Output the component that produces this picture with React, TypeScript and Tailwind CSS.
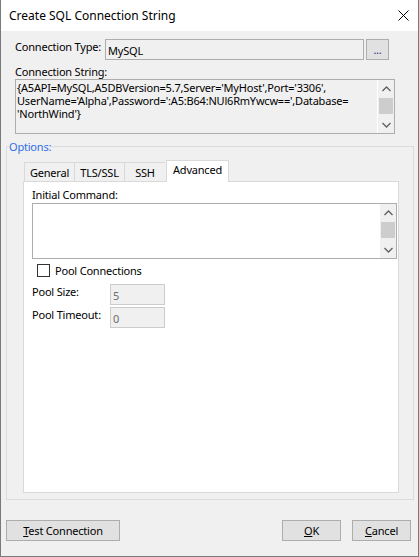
import React from "react";

const font = "font-['Noto_Sans',sans-serif]";

function Chevron({ up }: { up?: boolean }) {
  return (
    <svg width="9" height="6" viewBox="0 0 9 6" className="block">
      <path
        d={up ? "M0.5 5 L4.5 1 L8.5 5" : "M0.5 1 L4.5 5 L8.5 1"}
        fill="none"
        stroke="#606060"
        strokeWidth="1.3"
      />
    </svg>
  );
}

function VScroll({ thumbTop, thumbH }: { thumbTop: number; thumbH: number }) {
  return (
    <div className="w-[17px] h-full flex flex-col items-center bg-[#f0f0f0] border-l border-white">
      <div className="h-[17px] flex items-center justify-center">
        <Chevron up />
      </div>
      <div className="flex-1 w-full px-[1px]">
        <div className="w-full bg-[#cdcdcd]" style={{ marginTop: thumbTop, height: thumbH }} />
      </div>
      <div className="h-[17px] flex items-center justify-center">
        <Chevron />
      </div>
    </div>
  );
}

function Tab({ label, w, active }: { label: string; w: number; active?: boolean }) {
  return active ? (
    <div
      className="h-[22px] -mb-[1px] ml-[1px] flex items-start justify-center pt-[1px] bg-white border border-b-0 border-[#d9d9d9] relative z-10"
      style={{ width: w }}
    >
      {label}
    </div>
  ) : (
    <div
      className="h-[19px] flex items-center justify-center bg-[#f0f0f0] border border-b-0 border-r-0 border-[#d9d9d9] last:border-r"
      style={{ width: w }}
    >
      {label}
    </div>
  );
}

function Button({ children, w }: { children: React.ReactNode; w: number }) {
  return (
    <div
      className="h-[21px] flex items-center justify-center bg-[#e1e1e1] border border-[#adadad]"
      style={{ width: w }}
    >
      {children}
    </div>
  );
}

export default function App() {
  return (
    <div
      className={`${font} w-[419px] h-[557px] flex flex-col border border-t-0 border-[#7a7a7a] bg-[#f0f0f0] text-[11px] leading-[15px] tracking-[-0.2px] text-black`}
    >
      {/* title bar */}
      <div className="h-[31px] shrink-0 bg-white flex items-center pl-[8px] pr-[9px]">
        <span className="text-[12px] tracking-normal">Create SQL Connection String</span>
        <svg width="11" height="11" viewBox="0 0 11 11" className="ml-auto">
          <path d="M0.5 0.5 L10.5 10.5 M10.5 0.5 L0.5 10.5" stroke="#000" strokeWidth="1" />
        </svg>
      </div>

      {/* connection type */}
      <div className="mt-[8px] ml-[14px] flex items-start">
        <div className="w-[90px]">Connection Type:</div>
        <div className="w-[259px] h-[21px] border border-[#adadad] bg-[#f0f0f0] pl-[2px] flex items-center pt-[1px]">
          MySQL
        </div>
        <div className="ml-[2px] w-[23px] h-[21px] border border-[#adadad] bg-[#e1e1e1] flex items-end justify-center pb-[2px] text-[#2a2a7a]">
          ...
        </div>
      </div>

      {/* connection string */}
      <div className="mt-[4px] ml-[14px]">Connection String:</div>
      <div className="ml-[14px] w-[380px] h-[55px] border border-[#adadad] bg-[#f0f0f0] flex">
        <div className="flex-1 pl-[1px] pt-[1px] leading-[13px] whitespace-pre">
          {"{A5API=MySQL,A5DBVersion=5.7,Server='MyHost',Port='3306',\nUserName='Alpha',Password=':A5:B64:NUl6RmYwcw==',Database=\n'NorthWind'}"}
        </div>
        <VScroll thumbTop={1} thumbH={16} />
      </div>

      {/* options group */}
      <fieldset className="mt-[5px] ml-[5px] w-[408px] border border-[#dcdcdc] pb-[6px]">
        <legend className="ml-[2px] text-[#2f6fe4]">Options:</legend>
        <div className="ml-[16px] w-[376px] mt-[6px]">
          <div className="flex items-end pl-[1px]">
            <Tab label="General" w={50} />
            <Tab label="TLS/SSL" w={50} />
            <Tab label="SSH" w={41} />
            <Tab label="Advanced" w={63} active />
          </div>
          <div className="h-[312px] bg-white border border-[#d9d9d9] pl-[8px] pr-[1px]">
            <div className="mt-[5px]">Initial Command:</div>
            <div className="mt-[1px] w-[365px] h-[56px] border border-[#adadad] bg-white flex">
              <div className="flex-1" />
              <VScroll thumbTop={1} thumbH={16} />
            </div>
            <div className="mt-[4px] ml-[5px] flex items-center">
              <div className="w-[13px] h-[13px] border border-[#333] bg-white" />
              <span className="ml-[5px]">Pool Connections</span>
            </div>
            <div className="mt-[6px] flex items-start">
              <div className="w-[78px]">Pool Size:</div>
              <div className="w-[55px] h-[21px] border border-[#cccccc] bg-[#f0f0f0] pl-[2px] flex items-center pt-[1px] text-[#6d6d6d]">
                5
              </div>
            </div>
            <div className="mt-[2px] flex items-start">
              <div className="w-[78px]">Pool Timeout:</div>
              <div className="w-[55px] h-[21px] border border-[#cccccc] bg-[#f0f0f0] pl-[2px] flex items-center pt-[1px] text-[#6d6d6d]">
                0
              </div>
            </div>
          </div>
        </div>
      </fieldset>

      {/* dialog buttons */}
      <div className="mt-[20px] ml-[5px] mr-[7px] flex">
        <Button w={114}>
          <span>
            <span className="underline">T</span>est Connection
          </span>
        </Button>
        <div className="ml-auto" />
        <Button w={59}>
          <span>
            <span className="underline">O</span>K
          </span>
        </Button>
        <div className="w-[11px]" />
        <Button w={59}>
          <span>
            <span className="underline">C</span>ancel
          </span>
        </Button>
      </div>
    </div>
  );
}
